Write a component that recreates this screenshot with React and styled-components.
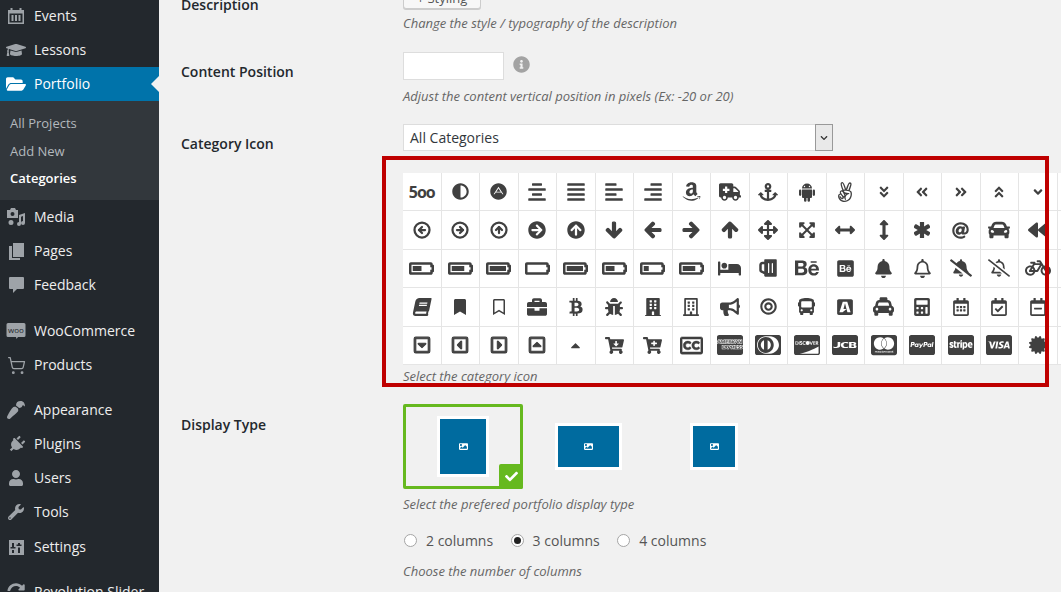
import styled, { createGlobalStyle } from 'styled-components';
import {
  FaAdjust, FaAdn, FaAlignCenter, FaAlignJustify, FaAlignLeft, FaAlignRight, FaAmazon, FaAmbulance,
  FaAnchor, FaAngellist, FaAngleDoubleDown, FaAngleDoubleLeft, FaAngleDoubleRight,
  FaAngleDoubleUp, FaAngleDown, FaArrowCircleRight, FaArrowCircleUp, FaArrowDown, FaArrowLeft,
  FaArrowRight, FaArrowUp, FaArrowsAlt, FaExpandArrowsAlt, FaArrowsAltH, FaArrowsAltV, FaAsterisk,
  FaAt, FaCar, FaBackward, FaBatteryEmpty, FaBatteryQuarter, FaBatteryHalf, FaBatteryThreeQuarters,
  FaBatteryFull, FaBed, FaBeer, FaBehance, FaBehanceSquare, FaBell, FaRegBell, FaBellSlash,
  FaRegBellSlash, FaBicycle, FaBook, FaBookmark, FaRegBookmark, FaBriefcase, FaBtc, FaBug, FaBuilding,
  FaRegBuilding, FaBullhorn, FaBullseye, FaBus, FaBuysellads, FaTaxi, FaCalculator, FaRegCalendarAlt,
  FaRegCalendarCheck, FaRegCalendarMinus, FaRegCaretSquareDown, FaRegCaretSquareLeft,
  FaRegCaretSquareRight, FaRegCaretSquareUp, FaCaretUp, FaCartArrowDown, FaCartPlus,
  FaRegClosedCaptioning, FaCcAmex, FaCcDinersClub, FaCcDiscover, FaCcJcb, FaCcMastercard, FaCcPaypal,
  FaCcStripe, FaCcVisa, FaCertificate, FaGraduationCap, FaFolderOpen, FaPaintBrush, FaPlug, FaUser,
  FaWrench, FaSyncAlt, FaInfoCircle, FaChevronDown, FaCheck, FaImage,
} from 'react-icons/fa';
import { CircleArrowLeft, CircleArrowRight, CircleArrowUp, ShoppingCart } from 'lucide-react';

const GlobalStyle = createGlobalStyle`
  html, body {
    margin: 0;
    padding: 0;
    background: #f1f1f1;
  }
  * {
    box-sizing: border-box;
  }
`;

const Five = styled.span`
  font-size: 16px;
  font-weight: 700;
  letter-spacing: -1px;
  color: #404040;
`;

const Tilted = styled.span`
  display: flex;
  transform: ${(p) => p.$transform};
`;

const CalendarIcon = () => (
  <svg width="18" height="18" viewBox="0 0 18 18" fill="currentColor">
    <path d="M1 3h2.500V1h2v2h7V1h2v2H17v14H1zM2.500 6.500v9h13v-9z" fillRule="evenodd" />
    <path d="M4.500 8h2v6h-2zM8 8h2v6H8zM11.500 8h2v6h-2z" />
  </svg>
);

const MediaIcon = () => (
  <svg width="20" height="20" viewBox="0 0 20 20" fill="currentColor">
    <path d="M1 3h3l1-2h4l1 2h2v8H1zM6.500 5a2 2 0 1 0 0 4 2 2 0 0 0 0-4z" fillRule="evenodd" />
    <path d="M13 8l6-2v10a2 2 0 1 1-2-2V9l-2 .7V17a2 2 0 1 1-2-2zM5 13a2.500 2.500 0 1 1 0 5 2.500 2.500 0 0 1 0-5z" />
  </svg>
);

const PagesIcon = () => (
  <svg width="20" height="20" viewBox="0 0 20 20" fill="currentColor">
    <path d="M7 2h11v14H7z" />
    <path d="M3 5h3v12h8v2H3z" />
  </svg>
);

const FeedbackIcon = () => (
  <svg width="20" height="20" viewBox="0 0 20 20" fill="currentColor">
    <path d="M4 2h13a1 1 0 0 1 1 1v10a1 1 0 0 1-1 1H11l-4 4v-4H4a1 1 0 0 1-1-1V3a1 1 0 0 1 1-1z" />
  </svg>
);

const WooIcon = () => (
  <svg width="20" height="20" viewBox="0 0 20 20" fill="currentColor">
    <path d="M2 2h16a1.500 1.500 0 0 1 1.500 1.500v11A1.500 1.500 0 0 1 18 16h-6l-1.500 2L10 16H2A1.500 1.500 0 0 1 .5 14.500v-11A1.500 1.500 0 0 1 2 2z" />
    <text x="10" y="12" textAnchor="middle" fontSize="8" fontFamily="'Open Sans', sans-serif" fill="#23282d">woo</text>
  </svg>
);

const SettingsIcon = () => (
  <svg width="18" height="18" viewBox="0 0 18 18">
    <path fill="currentColor" d="M2 2h15v15H2z" />
    <path fill="#23282d" d="M5 5h2v4h1.500v1.500h-5V9H5zM5 12h2v3H5zM11 5h2v1.500h1.500V8h-5V6.500H11zM11 9.500h2V15h-2z" />
  </svg>
);

const AndroidIcon = () => (
  <svg width="18" height="20" viewBox="0 0 18 20" fill="currentColor">
    <path d="M4 6.500a5 5 0 0 1 10 0zM6.500 3.800a.7.7 0 1 0 0 1.400.7.7 0 0 0 0-1.400zM11.500 3.800a.7.7 0 1 0 0 1.400.7.7 0 0 0 0-1.400z" fillRule="evenodd" />
    <path d="M4 7.500h10v7.500a1 1 0 0 1-1 1h-1v2.500a1.250 1.250 0 0 1-2.500 0V16h-1v2.500a1.250 1.250 0 0 1-2.500 0V16H5a1 1 0 0 1-1-1z" />
    <rect x="1" y="7.500" width="2.300" height="6.500" rx="1.150" />
    <rect x="14.700" y="7.500" width="2.300" height="6.500" rx="1.150" />
  </svg>
);

const menuTop = [
  { label: 'Events', icon: <CalendarIcon /> },
  { label: 'Lessons', icon: <FaGraduationCap size={20} /> },
];

const menuMiddle = [
  { label: 'Media', icon: <MediaIcon /> },
  { label: 'Pages', icon: <PagesIcon /> },
  { label: 'Feedback', icon: <FeedbackIcon /> },
  { label: 'WooCommerce', icon: <WooIcon />, gap: 12 },
  { label: 'Products', icon: <ShoppingCart size={19} strokeWidth={1.6} /> },
  { label: 'Appearance', icon: <Tilted $transform="rotate(180deg)"><FaPaintBrush size={18} /></Tilted>, gap: 11 },
  { label: 'Plugins', icon: <Tilted $transform="rotate(45deg)"><FaPlug size={17} /></Tilted> },
  { label: 'Users', icon: <FaUser size={16} /> },
  { label: 'Tools', icon: <FaWrench size={16} /> },
  { label: 'Settings', icon: <SettingsIcon />, gap: 1 },
  { label: 'Revolution Slider', icon: <FaSyncAlt size={18} />, gap: 11 },
];

const circleO = { size: 18, strokeWidth: 3 };
const heavy = { size: 18, stroke: 'currentColor', strokeWidth: 40 };
const boxed = { size: 18, stroke: 'currentColor', strokeWidth: 30 };

const icons = [
  <Five>5oo</Five>, <FaAdjust size={17} />, <FaAdn size={17} />, <FaAlignCenter size={20} />,
  <FaAlignJustify size={20} />, <FaAlignLeft size={20} />, <FaAlignRight size={20} />, <FaAmazon size={21} />,
  <FaAmbulance size={22} />, <FaAnchor size={20} />, <AndroidIcon />, <FaAngellist size={20} />,
  <FaAngleDoubleDown size={14} />, <FaAngleDoubleLeft size={14} />, <FaAngleDoubleRight size={14} />,
  <FaAngleDoubleUp size={14} />, <FaAngleDown size={14} />, <span />,

  <CircleArrowLeft {...circleO} />, <CircleArrowRight {...circleO} />, <CircleArrowUp {...circleO} />,
  <FaArrowCircleRight size={18} />, <FaArrowCircleUp size={18} />, <FaArrowDown {...heavy} />,
  <FaArrowLeft {...heavy} />, <FaArrowRight {...heavy} />, <FaArrowUp {...heavy} />, <FaArrowsAlt size={20} />,
  <FaExpandArrowsAlt size={18} />, <FaArrowsAltH size={20} />, <FaArrowsAltV size={20} />,
  <FaAsterisk size={16} stroke="currentColor" strokeWidth={50} />, <FaAt size={17} />, <FaCar size={22} />, <FaBackward size={20} />, <span />,

  <FaBatteryHalf size={25} />, <FaBatteryThreeQuarters size={25} />, <FaBatteryFull size={25} />,
  <FaBatteryEmpty size={25} />, <FaBatteryFull size={25} />, <FaBatteryHalf size={25} />,
  <FaBatteryQuarter size={25} />, <FaBatteryThreeQuarters size={25} />, <FaBed size={23} />,
  <Tilted $transform="scaleX(-1)"><FaBeer size={20} /></Tilted>, <FaBehance size={24} />, <FaBehanceSquare size={19} />, <FaBell size={19} />,
  <FaRegBell size={19} />, <FaBellSlash size={22} />, <FaRegBellSlash size={22} />, <FaBicycle size={26} />, <span />,

  <Tilted $transform="skewX(-12deg)"><FaBook size={18} /></Tilted>, <FaBookmark size={16} />, <FaRegBookmark size={16} />, <FaBriefcase size={20} />,
  <FaBtc size={18} />, <FaBug size={18} />, <FaBuilding size={18} />, <FaRegBuilding size={18} />,
  <FaBullhorn size={20} />, <FaBullseye size={17} />, <FaBus size={17} />, <FaBuysellads size={18} />,
  <FaTaxi size={21} />, <FaCalculator size={18} />, <FaRegCalendarAlt size={18} />,
  <FaRegCalendarCheck size={18} />, <FaRegCalendarMinus size={18} />, <span />,

  <FaRegCaretSquareDown {...boxed} />, <FaRegCaretSquareLeft {...boxed} />, <FaRegCaretSquareRight {...boxed} />,
  <FaRegCaretSquareUp {...boxed} />, <FaCaretUp size={15} />, <FaCartArrowDown size={19} />,
  <FaCartPlus size={19} />, <FaRegClosedCaptioning size={23} stroke="currentColor" strokeWidth={10} />, <FaCcAmex size={26} />,
  <FaCcDinersClub size={26} />, <FaCcDiscover size={26} />, <FaCcJcb size={26} />, <FaCcMastercard size={26} />,
  <FaCcPaypal size={26} />, <FaCcStripe size={26} />, <FaCcVisa size={26} />, <FaCertificate size={18} />, <span />,
];

const displayTypes = [
  { width: 46, height: 55, selected: true },
  { width: 61, height: 41 },
  { width: 42, height: 41 },
];

const columns = [
  { label: '2 columns' },
  { label: '3 columns', checked: true },
  { label: '4 columns' },
];

const MenuRow = ({ item }) => (
  <MenuItem $gap={item.gap}>
    <MenuIcon>{item.icon}</MenuIcon>
    <MenuText>{item.label}</MenuText>
  </MenuItem>
);

const App = () => (
  <Page>
    <GlobalStyle />
    <Sidebar>
      {menuTop.map((item) => (
        <MenuRow key={item.label} item={item} />
      ))}
      <MenuItem $active>
        <MenuIcon $active>
          <FaFolderOpen size={20} />
        </MenuIcon>
        <MenuText>Portfolio</MenuText>
      </MenuItem>
      <SubMenu>
        <SubItem>All Projects</SubItem>
        <SubItem>Add New</SubItem>
        <SubItem $current>Categories</SubItem>
      </SubMenu>
      {menuMiddle.map((item) => (
        <MenuRow key={item.label} item={item} />
      ))}
    </Sidebar>

    <Main>
      <Row>
        <Label>Description</Label>
        <Field>
          <StyleButton>+ Styling</StyleButton>
          <Hint $top={4}>Change the style / typography of the description</Hint>
        </Field>
      </Row>

      <Row $gap={19}>
        <Label>Content Position</Label>
        <Field>
          <InputLine>
            <TextBox />
            <InfoMark>
              <FaInfoCircle size={17} />
            </InfoMark>
          </InputLine>
          <Hint>Adjust the content vertical position in pixels (Ex: -20 or 20)</Hint>
        </Field>
      </Row>

      <Row>
        <Label>Category Icon</Label>
        <Field>
          <SelectBox>
            All Categories
            <SelectArrow>
              <FaChevronDown size={8} />
            </SelectArrow>
          </SelectBox>
          <IconGrid>
            {icons.map((icon, i) => (
              <IconCell key={i}>{icon}</IconCell>
            ))}
          </IconGrid>
          <Hint $top={1}>Select the category icon</Hint>
        </Field>
      </Row>

      <Row>
        <Label $top={11}>Display Type</Label>
        <Field>
          <TypeList>
            {displayTypes.map((type) => (
              <TypeOption key={type.width} $selected={type.selected}>
                <Thumb $width={type.width} $height={type.height}>
                  <FaImage size={9} />
                </Thumb>
                {type.selected && (
                  <CheckBadge>
                    <FaCheck size={13} />
                  </CheckBadge>
                )}
              </TypeOption>
            ))}
          </TypeList>
          <Hint $top={5}>Select the prefered portfolio display type</Hint>
          <RadioLine>
            {columns.map((col) => (
              <RadioLabel key={col.label}>
                <Radio type="radio" name="columns" defaultChecked={col.checked} />
                {col.label}
              </RadioLabel>
            ))}
          </RadioLine>
          <Hint $top={10}>Choose the number of columns</Hint>
        </Field>
      </Row>
    </Main>

    <Highlight />
  </Page>
);

export default App;

const Page = styled.div`
  position: relative;
  display: flex;
  width: 1061px;
  height: 592px;
  overflow: hidden;
  background: #f1f1f1;
  font-family: 'Open Sans', sans-serif;
`;

const Sidebar = styled.nav`
  flex: 0 0 159px;
  margin-top: -1px;
  background: #23282d;
  color: #eee;
  font-size: 14px;
`;

const MenuItem = styled.div`
  position: relative;
  display: flex;
  align-items: center;
  height: 34px;
  margin-top: ${(p) => p.$gap || 0}px;
  background: ${(p) => (p.$active ? '#0073aa' : 'transparent')};
  color: ${(p) => (p.$active ? '#fff' : '#eee')};

  &::after {
    content: '';
    display: ${(p) => (p.$active ? 'block' : 'none')};
    position: absolute;
    right: 0;
    top: 9px;
    border: 8px solid transparent;
    border-right-color: #f1f1f1;
    border-left-width: 0;
  }
`;

const MenuIcon = styled.span`
  display: flex;
  align-items: center;
  justify-content: center;
  width: 32px;
  margin-right: 2px;
  color: ${(p) => (p.$active ? '#fff' : '#9ea3a8')};
`;

const MenuText = styled.span`
  padding-bottom: 2px;
`;

const SubMenu = styled.div`
  padding: 9px 0 7.5px 10px;
  background: #32373c;
  font-size: 13px;
`;

const SubItem = styled.div`
  height: 27.5px;
  line-height: 27.5px;
  color: ${(p) => (p.$current ? '#fff' : '#b4b9be')};
  font-weight: ${(p) => (p.$current ? 600 : 400)};
`;

const Main = styled.main`
  flex: 1;
  min-width: 0;
  display: flex;
  flex-direction: column;
  gap: 18px;
  margin-top: -15px;
  padding-left: 22px;
  color: #444;
`;

const Row = styled.section`
  display: grid;
  grid-template-columns: 222px 1fr;
  margin-top: ${(p) => (p.$gap ? p.$gap - 18 : 0)}px;
`;

const Label = styled.div`
  padding-top: ${(p) => p.$top || 10}px;
  line-height: 20px;
  font-size: 14px;
  font-weight: 600;
  color: #23282d;
`;

const Field = styled.div`
  min-width: 0;
`;

const StyleButton = styled.div`
  display: flex;
  align-items: flex-end;
  justify-content: center;
  width: 78px;
  height: 24px;
  background: #f7f7f7;
  border: 1px solid #ccc;
  border-radius: 3px;
  box-shadow: 0 1px 0 #ccc;
  font-size: 13px;
  line-height: 20px;
  color: #555;
`;

const Hint = styled.p`
  margin: ${(p) => p.$top ?? 6}px 0 0;
  line-height: 20px;
  font-size: 13px;
  font-style: italic;
  color: #666;
`;

const InputLine = styled.div`
  display: flex;
  align-items: center;
  gap: 9px;
`;

const TextBox = styled.div`
  width: 101px;
  height: 28px;
  background: #fff;
  border: 1px solid #ddd;
`;

const InfoMark = styled.span`
  display: flex;
  margin-top: -4px;
  color: #a3a3a3;
`;

const SelectBox = styled.div`
  display: flex;
  align-items: center;
  justify-content: space-between;
  width: 430px;
  height: 27px;
  padding-left: 6px;
  background: #fff;
  border: 1px solid #ddd;
  font-size: 14px;
  color: #32373c;
`;

const SelectArrow = styled.span`
  display: flex;
  align-items: center;
  justify-content: center;
  width: 18px;
  height: 27px;
  margin-right: -1px;
  background: #e9e9e9;
  border: 1px solid #999;
  color: #333;
`;

const IconGrid = styled.div`
  display: grid;
  grid-template-columns: repeat(18, 38.5px);
  grid-auto-rows: 38.4px;
  margin-top: 22px;
`;

const IconCell = styled.div`
  display: flex;
  align-items: center;
  justify-content: center;
  background: #fff;
  border-right: 1px solid #e5e5e5;
  border-bottom: 1px solid #e5e5e5;
  color: #404040;
`;

const TypeList = styled.div`
  display: flex;
  gap: 5.5px;
`;

const TypeOption = styled.div`
  position: relative;
  display: flex;
  align-items: center;
  justify-content: center;
  width: 120px;
  height: 85px;
  border: 3px solid ${(p) => (p.$selected ? '#66b91f' : 'transparent')};
  border-radius: 2px;
`;

const Thumb = styled.div`
  display: flex;
  align-items: center;
  justify-content: center;
  width: ${(p) => p.$width + 6}px;
  height: ${(p) => p.$height + 6}px;
  background: #006b9f;
  border: 3px solid #fff;
  color: #fff;
`;

const CheckBadge = styled.span`
  position: absolute;
  right: -3px;
  bottom: -3px;
  display: flex;
  align-items: center;
  justify-content: center;
  width: 24px;
  height: 25px;
  background: #66b91f;
  border-radius: 2px 0 2px 0;
  color: #fff;
`;

const RadioLine = styled.div`
  display: flex;
  gap: 17.5px;
  margin-top: 17px;
  padding-left: 1px;
  line-height: 20px;
`;

const RadioLabel = styled.label`
  display: flex;
  align-items: center;
  gap: 9px;
  font-size: 14px;
  color: #555;
`;

const Radio = styled.input`
  appearance: none;
  display: flex;
  align-items: center;
  justify-content: center;
  width: 13px;
  height: 13px;
  margin: 0;
  background: #fff;
  border: 1px solid #a5a5a5;
  border-radius: 50%;

  &:checked::before {
    content: '';
    width: 7px;
    height: 7px;
    background: #222;
    border-radius: 50%;
  }
`;

const Highlight = styled.div`
  position: absolute;
  left: 382px;
  top: 156px;
  width: 667px;
  height: 231px;
  border: 4px solid #bf0000;
  pointer-events: none;
`;
